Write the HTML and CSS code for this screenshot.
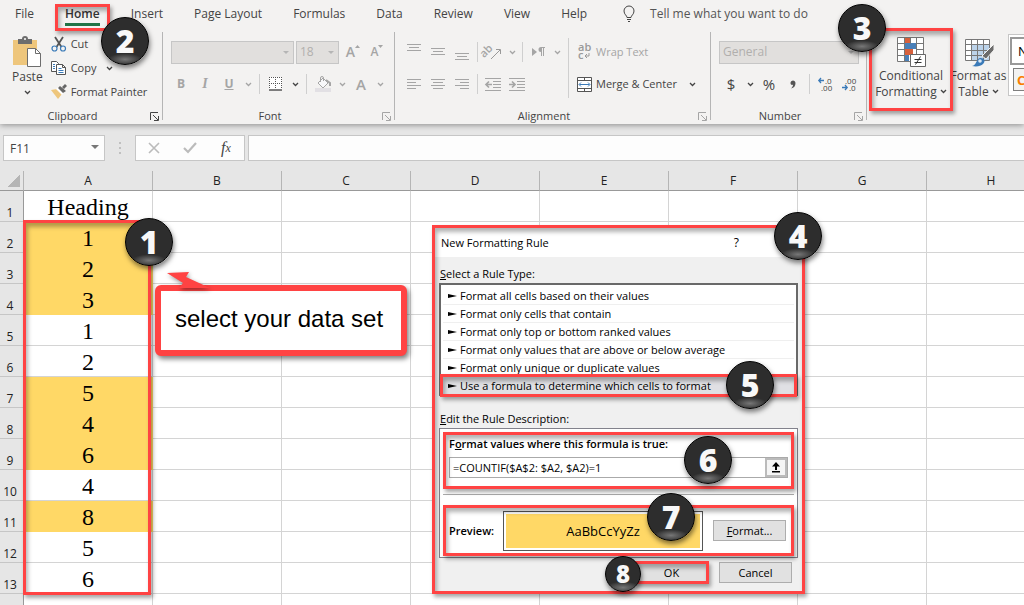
FILE: index.html
```html
<!DOCTYPE html>
<html lang="en">
<head>
    <meta charset="UTF-8">
    <meta name="viewport" content="width=device-width, initial-scale=1.0">
    <title>New Formatting Rule</title>
    <link rel="stylesheet" href="styles.css">
</head>
<body>
    <!-- shared icons -->
    <svg class="defs" width="0" height="0">
        <symbol id="chev" viewBox="0 0 7 5"><path d="M1 1l2.5 2.5L6 1" fill="none" stroke="currentColor" stroke-width="1.3"/></symbol>
        <symbol id="launch" viewBox="0 0 9 9"><path d="M.5 8V.5H8M3 3l5 5M8.500 4v4.500H4" fill="none" stroke="currentColor"/></symbol>
    </svg>

    <header class="ribbon">
        <nav class="tabs">
            <button class="tab">File</button>
            <button class="tab active">Home<span class="mark mark-home"></span></button>
            <button class="tab">Insert</button>
            <button class="tab">Page Layout</button>
            <button class="tab">Formulas</button>
            <button class="tab">Data</button>
            <button class="tab">Review</button>
            <button class="tab">View</button>
            <button class="tab">Help</button>
            <button class="tab tell">
                <svg width="12" height="17" viewBox="0 0 12 17" fill="none" stroke="#444"><path d="M4 12.500c0-2-3-3-3-6.500a5 5 0 0 1 10 0c0 3.500-3 4.500-3 6.500zM4 14.500h4M5 16.500h2"/></svg>
                Tell me what you want to do
            </button>
        </nav>

        <div class="groups">
            <section class="group clipboard">
                <div class="tools">
                    <button class="big paste">
                        <svg width="30" height="32" viewBox="0 0 30 32">
                            <path d="M1 4h24v25H1z" fill="#eec67c"/>
                            <path d="M6 3h4a3 3 0 0 1 6 0h4v5H6z" fill="#6d6d6d"/><circle cx="13" cy="3" r="1" fill="#fff"/>
                            <path d="M15.500 12.500h8l5 5v13h-13z" fill="#fff" stroke="#6d6d6d"/><path d="M23.500 12.500v5h5" fill="none" stroke="#6d6d6d"/>
                        </svg>
                        <span>Paste</span>
                        <svg class="chev"><use href="#chev"/></svg>
                    </button>
                    <div class="stack">
                        <button class="line">
                            <svg width="16" height="16" viewBox="0 0 16 16" fill="none"><path d="M4 1l6.500 10M12 1L5.500 11" stroke="#555" stroke-width="1.800"/><circle cx="3.500" cy="12.500" r="2.500" stroke="#3a7ab8" stroke-width="1.200"/><circle cx="12" cy="12.500" r="2.500" stroke="#3a7ab8" stroke-width="1.200"/></svg>
                            Cut
                        </button>
                        <button class="line">
                            <svg width="16" height="16" viewBox="0 0 16 16"><path d="M.5 1.500h5l2 2v8h-7z" fill="#fff" stroke="#555"/><path d="M5.500 4.500h6l3 3v7h-9z" fill="#fff" stroke="#555"/><path d="M11.500 4.500v3h3" fill="none" stroke="#555"/><path d="M2 4.500h2M2 6.500h2M2 8.500h2M7.500 8.500h3M7.500 10.500h5M7.500 12.500h5" stroke="#3a7ab8"/></svg>
                            Copy
                            <svg class="chev copy-chev"><use href="#chev"/></svg>
                        </button>
                        <button class="line">
                            <svg width="16" height="16" viewBox="0 0 16 16"><path d="M0 6l6-1 5 5-4 5z" fill="#eec67c"/><path d="M5 5l3-2 5 5-2 3z" fill="#fff"/><path d="M7 4l2-2 6 5-3 2zM11 3l3-3 2 2-3 3z" fill="#666"/></svg>
                            Format Painter
                        </button>
                    </div>
                </div>
                <footer>Clipboard<svg class="launch"><use href="#launch"/></svg></footer>
            </section>

            <section class="group font">
                <div class="tools rows">
                    <div class="row fields">
                        <label class="combo combo-font"><select aria-label="Font" disabled><option></option></select></label>
                        <label class="combo combo-size"><select aria-label="Font size" disabled><option>18</option></select></label>
                        <button class="tool grow-font off">A<svg width="5" height="3" viewBox="0 0 5 3"><path d="M0 3L2.500 0 5 3z" fill="currentColor"/></svg></button>
                        <button class="tool shrink-font off">A<svg width="5" height="3" viewBox="0 0 5 3"><path d="M0 0h5L2.500 3z" fill="currentColor"/></svg></button>
                    </div>
                    <div class="row">
                        <button class="tool off"><b>B</b></button>
                        <button class="tool off"><i>I</i></button>
                        <button class="tool off"><u>U</u></button>
                        <button class="drop off"><svg class="chev"><use href="#chev"/></svg></button>
                        <span class="sep"></span>
                        <button class="tool">
                            <svg width="14" height="14" viewBox="0 0 14 14" fill="none" stroke="#555"><path d="M0 0h13v13H0z" fill="#fff" stroke="none"/><path d="M.5 0v12M6.500 0v12M12.500 0v12M0 .5h12M0 6.500h12" stroke-dasharray="1 1"/><path d="M0 13h13" stroke-width="1.500"/></svg>
                        </button>
                        <button class="drop"><svg class="chev"><use href="#chev"/></svg></button>
                        <span class="sep"></span>
                        <button class="tool off">
                            <svg width="17" height="17" viewBox="0 0 17 17" fill="none" stroke="#a5a5a5"><path d="M0 12h16v4H0z" fill="#e2e0e4" stroke="none"/><path d="M3 7l5-5 5 5-5 5z" fill="#f8f8fa"/><path d="M5.500 6V2a1.500 1.500 0 0 1 3 0v3"/><path d="M11 4l4 3v3" stroke-width="2"/></svg>
                        </button>
                        <button class="drop off"><svg class="chev"><use href="#chev"/></svg></button>
                        <button class="tool font-color off">A</button>
                        <button class="drop off"><svg class="chev"><use href="#chev"/></svg></button>
                    </div>
                </div>
                <footer>Font<svg class="launch off"><use href="#launch"/></svg></footer>
            </section>

            <section class="group alignment">
                <div class="tools">
                    <div class="rows">
                        <div class="row">
                            <button class="tool off"><svg width="14" height="18" viewBox="0 0 14 18" stroke="#a5a5a5"><path d="M0 1.500h14M2 4.500h10M0 7.500h14"/></svg></button>
                            <button class="tool off"><svg width="14" height="18" viewBox="0 0 14 18" stroke="#a5a5a5"><path d="M0 5.500h14M2 8.500h10M0 11.500h14"/></svg></button>
                            <button class="tool off"><svg width="14" height="18" viewBox="0 0 14 18" stroke="#a5a5a5"><path d="M0 10.500h14M2 13.500h10M0 16.500h14"/></svg></button>
                            <span class="sep"></span>
                            <button class="tool off"><svg width="18" height="18" viewBox="0 0 18 18"><text x="-3" y="10" transform="rotate(-45 5 9)" font-size="11" font-weight="600" fill="#a5a5a5">ab</text><path d="M7 16l9-9M12 6.500h4.500V11" fill="none" stroke="#999"/></svg></button>
                            <button class="drop off"><svg class="chev"><use href="#chev"/></svg></button>
                            <span class="sep"></span>
                            <button class="tool off"><svg width="13" height="10" viewBox="0 0 13 10"><path d="M0 1l5 4-5 4zM9 0h4v1h-1v8h-1V1h-1v8H9V5a2.500 2.500 0 0 1 0-5z" fill="#a5a5a5"/></svg></button>
                            <button class="drop off"><svg class="chev"><use href="#chev"/></svg></button>
                        </div>
                        <div class="row">
                            <button class="tool off"><svg width="14" height="11" viewBox="0 0 14 11" stroke="#a5a5a5"><path d="M0 .5h14M0 3.500h9M0 6.500h14M0 9.500h9"/></svg></button>
                            <button class="tool off"><svg width="14" height="11" viewBox="0 0 14 11" stroke="#a5a5a5"><path d="M0 .5h14M2 3.500h10M0 6.500h14M2 9.500h10"/></svg></button>
                            <button class="tool off"><svg width="14" height="11" viewBox="0 0 14 11" stroke="#a5a5a5"><path d="M0 .5h14M5 3.500h9M0 6.500h14M5 9.500h9"/></svg></button>
                            <span class="sep"></span>
                            <button class="tool off"><svg width="16" height="13" viewBox="0 0 16 13" fill="none" stroke="#a5a5a5"><path d="M0 .5h16M8 3.500h8M8 6.500h8M8 9.500h8M0 12.500h16"/><path d="M7 6.500H1M4 3.500l-3 3 3 3" stroke-width="1.700"/></svg></button>
                            <button class="tool off"><svg width="16" height="13" viewBox="0 0 16 13" fill="none" stroke="#a5a5a5"><path d="M0 .5h16M8 3.500h8M8 6.500h8M8 9.500h8M0 12.500h16"/><path d="M0 6.500h6M3 3.500l3 3-3 3" stroke-width="1.700"/></svg></button>
                        </div>
                    </div>
                    <span class="sep tall"></span>
                    <div class="rows wide">
                        <button class="line off">
                            <svg width="15" height="18" viewBox="0 0 15 18"><text x="1" y="8" font-size="11" font-weight="600" fill="#999">ab</text><text x="1" y="16" font-size="11" font-weight="600" fill="#999">c</text><path d="M12 10v3H8M10 11l-2 2 2 2" fill="none" stroke="#999"/></svg>
                            Wrap Text
                        </button>
                        <button class="line">
                            <svg width="15" height="15" viewBox="0 0 15 15" fill="none"><path d="M.5.5h14v14H.5zM.5 3.500h14M.5 11.500h14M7.500.5v3M7.500 11.500v3" fill="#fff" stroke="#555"/><path d="M2.500 7.500h10M4 5.500l-2 2 2 2M11 5.500l2 2-2 2" stroke="#3a7ab8"/></svg>
                            Merge &amp; Center
                            <svg class="chev"><use href="#chev"/></svg>
                        </button>
                    </div>
                </div>
                <footer>Alignment<svg class="launch off"><use href="#launch"/></svg></footer>
            </section>

            <section class="group number">
                <div class="tools rows">
                    <div class="row">
                        <label class="combo combo-number"><select aria-label="Number format" disabled><option>General</option></select></label>
                    </div>
                    <div class="row">
                        <button class="tool sign">$</button>
                        <button class="drop"><svg class="chev"><use href="#chev"/></svg></button>
                        <button class="tool sign">%</button>
                        <button class="tool comma"><svg width="6" height="9" viewBox="0 0 6 9"><path d="M1 4.500A2.500 2.500 0 1 1 5.500 3C5.500 6 4 8 1 8.500 2.500 7 3 6 3 4.800 2 5 1.500 5 1 4.500z" fill="#555"/></svg></button>
                        <span class="sep"></span>
                        <button class="tool"><svg width="16" height="16" viewBox="0 0 16 16"><text x="7" y="8" font-size="8">.0</text><text x="3" y="15" font-size="8">.00</text><path d="M6 4.500H1M3 2L.8 4.500 3 7" fill="none" stroke="#3a7ab8" stroke-width="1.300"/></svg></button>
                        <button class="tool"><svg width="16" height="16" viewBox="0 0 16 16"><text x="3" y="8" font-size="8">.00</text><text x="7" y="15" font-size="8">.0</text><path d="M0 11.500h5M3 9l2.200 2.500L3 14" fill="none" stroke="#3a7ab8" stroke-width="1.300"/></svg></button>
                    </div>
                </div>
                <footer>Number<svg class="launch off"><use href="#launch"/></svg></footer>
            </section>

            <section class="group styles">
                <button class="big cond">
                    <svg width="30" height="32" viewBox="0 0 30 32">
                        <path d="M1.500 1.500h26v24h-26z" fill="#fff"/>
                        <path d="M8 1h7v6H8zM8 13h9v6H8z" fill="#d8613c"/><path d="M8 7h12v6H8zM8 19h5v6H8z" fill="#4a80b8"/>
                        <path d="M1.500 1.500h26v24h-26zM8.500 1.500v24M14.500 1.500v6M20.500 1.500v24M1.500 7.500h7M1.500 13.500h7M1.500 19.500h7M20.500 7.500h7M20.500 13.500h7" fill="none" stroke="#777"/>
                        <path d="M14.500 18.500h15v12h-15z" fill="#fff" stroke="#666"/>
                        <path d="M18.500 23.500h7M18.500 26.500h7M24.500 20.500l-5 8" stroke="#333" fill="none"/>
                    </svg>
                    <span>Conditional<br>Formatting <svg class="chev"><use href="#chev"/></svg></span>
                    <span class="mark mark-cond"></span>
                    <span class="badge badge-3">3</span>
                </button>
                <button class="big table-format">
                    <svg width="30" height="32" viewBox="0 0 30 32">
                        <path d="M1.500 3.500h24v21h-24z" fill="#fff"/><path d="M8 9h17v15H8z" fill="#bcd3ea"/>
                        <path d="M1.500 3.500h24v21h-24zM7.500 3.500v21M13.500 3.500v21M19.500 3.500v21M1.500 8.500h24M1.500 14.500h24M1.500 19.500h24" fill="none" stroke="#777"/>
                        <path d="M30 8v6l-8 9-4-3z" fill="#6b6b6b" stroke="#f3f2f1"/>
                        <path d="M8 30c5-1 4-7 8-8 4-.5 6 3 3 6-2 2-6 3-11 2z" fill="#3a7ab8"/><circle cx="16" cy="25" r="1.800" fill="#dce8f4"/>
                    </svg>
                    <span>Format as<br>Table <svg class="chev"><use href="#chev"/></svg></span>
                </button>
                <div class="gallery">
                    <button class="swatch normal">Normal</button>
                    <button class="swatch calc">Calculation</button>
                </div>
            </section>
        </div>
        <span class="badge badge-2">2</span>
    </header>

    <div class="formula-bar">
        <div class="name-box"><input type="text" aria-label="Name box" value="F11"><i class="tri"></i></div>
        <span class="dots"></span>
        <div class="fx">
            <button aria-label="Cancel entry"><svg width="12" height="12" viewBox="0 0 12 12"><path d="M1 1l10 10M11 1L1 11" stroke="#bbb" stroke-width="1.600"/></svg></button>
            <button aria-label="Enter"><svg width="14" height="12" viewBox="0 0 14 12"><path d="M1 6l4 4 8-9" fill="none" stroke="#bbb" stroke-width="2.200"/></svg></button>
            <button class="fn">f<small>x</small></button>
        </div>
        <input class="formula" type="text" aria-label="Formula">
    </div>

    <main class="sheet">
        <table class="grid">
            <colgroup><col class="num"><col span="8" class="data"></colgroup>
            <thead>
                <tr><th class="corner"></th><th>A</th><th>B</th><th>C</th><th>D</th><th>E</th><th>F</th><th>G</th><th>H</th></tr>
            </thead>
            <tbody>
                <tr><th>1</th><td>Heading</td><td></td><td></td><td></td><td></td><td></td><td></td><td></td></tr>
                <tr><th>2</th><td class="hit">1</td><td></td><td></td><td></td><td></td><td></td><td></td><td></td></tr>
                <tr><th>3</th><td class="hit">2</td><td></td><td></td><td></td><td></td><td></td><td></td><td></td></tr>
                <tr><th>4</th><td class="hit">3</td><td></td><td></td><td></td><td></td><td></td><td></td><td></td></tr>
                <tr><th>5</th><td>1</td><td></td><td></td><td></td><td></td><td></td><td></td><td></td></tr>
                <tr><th>6</th><td>2</td><td></td><td></td><td></td><td></td><td></td><td></td><td></td></tr>
                <tr><th>7</th><td class="hit">5</td><td></td><td></td><td></td><td></td><td></td><td></td><td></td></tr>
                <tr><th>8</th><td class="hit">4</td><td></td><td></td><td></td><td></td><td></td><td></td><td></td></tr>
                <tr><th>9</th><td class="hit">6</td><td></td><td></td><td></td><td></td><td></td><td></td><td></td></tr>
                <tr><th>10</th><td>4</td><td></td><td></td><td></td><td></td><td></td><td></td><td></td></tr>
                <tr><th>11</th><td class="hit">8</td><td></td><td></td><td></td><td></td><td></td><td></td><td></td></tr>
                <tr><th>12</th><td>5</td><td></td><td></td><td></td><td></td><td></td><td></td><td></td></tr>
                <tr><th>13</th><td>6</td><td></td><td></td><td></td><td></td><td></td><td></td><td></td></tr>
                <tr><th></th><td></td><td></td><td></td><td></td><td></td><td></td><td></td><td></td></tr>
            </tbody>
        </table>

        <span class="mark mark-data"></span>
        <span class="badge badge-1">1</span>

        <div class="callout">
            <svg class="pointer" width="44" height="20" viewBox="0 0 44 20"><path d="M2 2l22-1-3 5 24 11H14l4-5z" fill="#ff4343"/></svg>
            <p>select your data set</p>
        </div>

        <div class="dialog" role="dialog" aria-label="New Formatting Rule">
            <div class="title"><span>New Formatting Rule</span><button class="help">?</button></div>
            <div class="content">
                <p class="caption"><u>S</u>elect a Rule Type:</p>
                <ul class="rules">
                    <li>Format all cells based on their values</li>
                    <li>Format only cells that contain</li>
                    <li>Format only top or bottom ranked values</li>
                    <li>Format only values that are above or below average</li>
                    <li>Format only unique or duplicate values</li>
                    <li class="selected">Use a formula to determine which cells to format<span class="mark mark-rule"></span><span class="badge badge-5">5</span></li>
                </ul>
                <p class="caption"><u>E</u>dit the Rule Description:</p>
                <div class="description">
                    <div class="condition">
                        <label for="formula">F<u>o</u>rmat values where this formula is true:</label>
                        <div class="ref-edit">
                            <input id="formula" type="text" value="=COUNTIF($A$2: $A2, $A2)=1">
                            <button aria-label="Collapse dialog"><svg width="10" height="11" viewBox="0 0 10 11"><path d="M5 0l4 4.500H6V8H4V4.500H1zM1 9h8v1.500H1z"/></svg></button>
                        </div>
                        <span class="mark mark-inner"></span>
                        <span class="badge badge-6">6</span>
                    </div>
                    <div class="preview">
                        <b>Preview:</b>
                        <div class="sample"><span>AaBbCcYyZz</span></div>
                        <button class="btn"><span><u>F</u>ormat...</span></button>
                        <span class="mark mark-inner"></span>
                        <span class="badge badge-7">7</span>
                    </div>
                </div>
                <div class="actions">
                    <button class="btn">OK<span class="mark mark-ok"></span><span class="badge small badge-8">8</span></button>
                    <button class="btn">Cancel</button>
                </div>
            </div>
            <span class="mark mark-dialog"></span>
            <span class="badge badge-4">4</span>
        </div>
    </main>
</body>
</html>
```
FILE: styles.css
```css
*{
    padding: 0;
    margin: 0;
    box-sizing: border-box;
}
body{
    display: flex;
    flex-direction: column;
    height: 100vh;
    overflow: hidden;
    background: #e6e6e6;
    color: #444;
    font-family: "Open Sans", "Noto Sans", sans-serif;
    font-size: 12px;
    line-height: 16px;
}
button{
    border: 0;
    background: none;
    color: inherit;
    font: inherit;
    white-space: nowrap;
}
input, select{
    font: inherit;
    color: inherit;
    border: 0;
    outline: 0;
    min-width: 0;
}
svg{
    display: block;
    flex: none;
    overflow: visible;
}
.defs{
    position: absolute;
}
.off{
    color: #a5a5a5;
}
.chev{
    width: 7px;
    height: 5px;
}

/* red frames and numbered badges */
.mark{
    position: absolute;
    border: 3px solid #ff4343;
    box-shadow: 2px 3px 4px rgba(0,0,0,.35), inset 2px 4px 4px rgba(0,0,0,.3);
    pointer-events: none;
    z-index: 2;
}
.badge{
    position: absolute;
    z-index: 4;
    width: 48px;
    height: 48px;
    border-radius: 50%;
    border: 1px solid #000;
    background: radial-gradient(ellipse 17px 6px at 50% 90%, #777 0%, #2d2d2d 100%);
    box-shadow: 1px 3px 5px rgba(0,0,0,.5);
    color: #f8f8f8;
    font-size: 32px;
    font-weight: 800;
    line-height: 46px;
    text-align: center;
}
.badge.small{
    width: 36px;
    height: 36px;
    font-size: 24px;
    line-height: 34px;
}

/* ribbon */
.ribbon{
    position: relative;
    z-index: 3;
    background: #f3f2f1;
    box-shadow: 0 1px 6px rgba(0,0,0,.4);
}
.tabs{
    display: flex;
    gap: 31px;
    height: 28px;
    padding: 5px 15px 0;
}
.tab{
    position: relative;
    height: 21px;
    line-height: 18px;
    display: flex;
}
.tab.active{
    font-weight: 600;
    color: #333;
    border-bottom: 3px solid #217346;
}
.mark-home{
    inset: -1px -10px -8px -10px;
}
.tell{
    gap: 15px;
    margin-left: 5px;
    color: #555;
}
.badge-2{
    left: 101px;
    top: 17px;
}
.groups{
    display: flex;
    height: 96px;
}
.group{
    position: relative;
    flex: none;
    display: flex;
    flex-direction: column;
    padding: 4px 0 0;
}
.group:not(.styles)::after{
    content: "";
    position: absolute;
    right: 0;
    top: 4px;
    bottom: 4px;
    width: 1px;
    background: #b5b5b5;
}
.group footer{
    display: flex;
    align-items: center;
    justify-content: center;
    position: relative;
    height: 16px;
    padding-right: 18px;
    font-size: 11px;
}
.launch{
    position: absolute;
    right: 4px;
    top: 4px;
    width: 9px;
    height: 9px;
}
.tools{
    display: flex;
    height: 76px;
}
.big{
    position: relative;
    flex: none;
    display: flex;
    flex-direction: column;
    align-items: center;
    padding-top: 4px;
}
.big span .chev{
    display: inline-block;
    vertical-align: 2px;
}
.paste > span{
    line-height: 18px;
    margin-bottom: 4px;
}
.clipboard{
    width: 163px;
}
.clipboard .tools{
    padding-left: 12px;
    gap: 8px;
}
.stack{
    display: flex;
    flex-direction: column;
}
.line{
    display: flex;
    align-items: center;
    gap: 4px;
    height: 24px;
    font-size: 11px;
}
.copy-chev{
    margin-left: 6px;
}
.rows{
    display: flex;
    flex-direction: column;
    gap: 8px;
    padding-top: 8px;
}
.row{
    display: flex;
    align-items: center;
    height: 24px;
}
.tool{
    display: flex;
    align-items: center;
    justify-content: center;
    width: 24px;
    height: 24px;
}
.tool b, .tool u{
    font-weight: 700;
}
.tool i{
    font-family: "Liberation Serif", serif;
    font-size: 14px;
    font-weight: 700;
}
.drop{
    display: flex;
    align-items: center;
    justify-content: center;
    width: 14px;
    height: 24px;
}
.sep{
    width: 1px;
    height: 20px;
    margin: 0 4px;
    background: #cfcfcf;
}
.combo{
    position: relative;
    height: 23px;
    border: 1px solid #c6c6c6;
    background: #e1dfdd;
}
.combo::after, .tri{
    content: "";
    position: absolute;
    right: 4px;
    top: 9px;
    border: 3px solid transparent;
    border-top-color: #b5b5b5;
    border-bottom: 0;
}
.combo select{
    appearance: none;
    width: 100%;
    height: 21px;
    padding-left: 3px;
    background: none;
    color: #b1afad;
    opacity: 1;
}
.font{
    width: 232px;
}
.font .tools{
    padding-left: 6px;
}
.fields{
    padding-left: 2px;
}
.combo-font{
    width: 123px;
    margin-right: 2px;
}
.combo-size{
    width: 43px;
    margin-right: 2px;
}
.grow-font, .shrink-font{
    align-items: center;
    font-weight: 600;
    font-size: 14px;
}
.grow-font svg, .shrink-font svg{
    margin-bottom: 12px;
}
.shrink-font{
    font-size: 12px;
}
.font-color{
    font-size: 15px;
    font-weight: 600;
}
.alignment{
    width: 316px;
}
.alignment .tools{
    padding-left: 7px;
}
.alignment .sep{
    margin: 0 3px;
}
.alignment .tall{
    height: 60px;
    margin: 6px 8px 0 4px;
}
.wide .chev{
    margin-left: 8px;
}
.number{
    width: 156px;
}
.number .tools{
    padding-left: 8px;
}
.combo-number{
    width: 140px;
}
.sign{
    font-size: 15px;
}
.number text{
    fill: #444;
}
.styles{
    flex: 1;
    flex-direction: row;
    min-width: 0;
}
.cond{
    width: 84px;
    height: 84px;
    margin-left: 2px;
}
.table-format{
    width: 51px;
    height: 84px;
}
.mark-cond{
    inset: -4px 0 5px 0;
}
.badge-3{
    left: -31px;
    top: -28px;
}
.gallery{
    flex: 1;
    min-width: 0;
    height: 62px;
    margin: 2px 0 0 4px;
    padding: 2px 0 2px 1px;
    border: 1px solid #c6c6c6;
    border-right: 0;
    background: #fff;
    overflow: hidden;
}
.swatch{
    display: block;
    width: 76px;
    height: 28px;
    padding-left: 6px;
    border: 2px solid #999;
    font-size: 13px;
    text-align: left;
    color: #000;
}
.calc{
    height: 23px;
    margin: 3px 0 0 3px;
    padding-left: 3px;
    border: 1px solid #7f7f7f;
    background: #f2f2f2;
    color: #fa7d00;
    font-weight: 700;
}

/* formula bar */
.formula-bar{
    display: flex;
    height: 47px;
    padding: 11px 0 10px 3px;
}
.name-box, .fx, .formula{
    height: 26px;
    border: 1px solid #c6c6c6;
    background: #fdfdfd;
}
.name-box{
    position: relative;
    width: 102px;
}
.name-box input{
    width: 80px;
    height: 24px;
    padding-left: 6px;
    background: none;
}
.name-box .tri{
    right: 5px;
    border-width: 4px 4px 0;
    border-top-color: #777;
}
.dots{
    width: 30px;
    background: radial-gradient(circle, #999 1px, transparent 1px) center / 30px 5px;
    margin: 5px 0;
}
.fx{
    display: flex;
    width: 110px;
    margin-right: 3px;
}
.fx button{
    flex: 1;
    display: flex;
    align-items: center;
    justify-content: center;
}
.fx .fn{
    font: italic 16px "Liberation Serif", serif;
}
.fn small{
    font-size: 12px;
}
.formula{
    flex: 1;
    border-right: 0;
}

/* sheet */
.sheet{
    position: relative;
    flex: 1;
    min-height: 0;
    overflow: hidden;
}
.grid{
    width: 1056px;
    min-width: 100%;
    table-layout: fixed;
    border-collapse: separate;
    border-spacing: 0;
    background: #fff;
}
.num{
    width: 24px;
}
.data{
    width: 129px;
}
.grid th{
    background: #e6e6e6;
    color: #222;
    font-weight: 400;
    border-right: 1px solid #b5b5b5;
    border-bottom: 1px solid #c6c6c6;
}
.grid thead th{
    height: 20px;
    border-bottom-color: #999;
}
.grid .corner{
    background: linear-gradient(135deg, transparent 50%, #b5b5b5 50%) 8px 4px / 12px 12px no-repeat #e6e6e6;
}
.grid tbody th{
    height: 31px;
    padding-right: 3px;
    vertical-align: bottom;
    border-right-color: #999;
}
.grid td{
    height: 31px;
    border-right: 1px solid #d4d4d4;
    border-bottom: 1px solid #d4d4d4;
    color: #000;
    font-family: "Liberation Serif", serif;
    font-size: 24px;
    line-height: 28px;
    padding-top: 2px;
    text-align: center;
}
.grid .hit{
    background: #ffd866;
    border-color: #ffd866;
}
.mark-data{
    left: 23px;
    top: 49px;
    width: 128px;
    height: 375px;
}
.badge-1{
    left: 125px;
    top: 47px;
}
.callout{
    position: absolute;
    left: 155px;
    top: 114px;
    z-index: 3;
    padding: 14px 18px 14px 14px;
    border: 6px solid #ff4343;
    border-radius: 6px;
    background: #fff;
    box-shadow: 2px 3px 5px rgba(0,0,0,.5);
    color: #000;
    font-family: "Liberation Sans", sans-serif;
    font-size: 24px;
    line-height: 28px;
    padding-bottom: 17px;
    white-space: nowrap;
}
.pointer{
    position: absolute;
    left: 4px;
    top: -20px;
    filter: drop-shadow(1px 2px 2px rgba(0,0,0,.4));
}

/* dialog */
.dialog{
    position: absolute;
    left: 432px;
    top: 54px;
    width: 373px;
    padding: 3px;
    background: #f0f0f0;
    color: #000;
    font-size: 11px;
}
.mark-dialog{
    inset: 0;
    z-index: 1;
}
.badge-4{
    right: -17px;
    top: -13px;
}
.title{
    display: flex;
    justify-content: space-between;
    align-items: center;
    height: 29px;
    padding: 0 63px 0 6px;
    background: #fff;
}
.help{
    font-size: 12px;
}
.content{
    padding: 9px 4px 8px;
}
.caption{
    padding-left: 1px;
    margin-bottom: 1px;
}
.rules{
    list-style: none;
    margin-bottom: 15px;
    padding: 2px 2px 0;
    border: 2px solid #696969;
    border-bottom: 1px solid #999;
    background: #fff;
}
.rules li{
    position: relative;
    height: 18px;
    padding-left: 17px;
    border-bottom: 1px solid #efefef;
    line-height: 18px;
}
.rules li::before{
    content: "";
    position: absolute;
    left: 5px;
    top: 7px;
    border: 2px solid transparent;
    border-left: 9px solid #000;
}
.rules .selected{
    background: #e0e0e4;
}
.mark-rule{
    inset: -3px;
}
.badge-5{
    left: 283px;
    top: -16px;
}
.description{
    padding: 3px 3px 1px;
    border: 1px solid #82828c;
    background: #fff;
}
.condition, .preview{
    position: relative;
}
.condition{
    height: 57px;
    padding: 4px 6px 0;
}
.condition label, .preview b{
    font-weight: 600;
}
.condition label{
    display: block;
    margin-bottom: 5px;
}
.ref-edit{
    display: flex;
    height: 21px;
    border: 1px solid #aaa;
}
.ref-edit input{
    flex: 1;
    padding-left: 3px;
}
.ref-edit button{
    width: 22px;
    display: flex;
    align-items: center;
    justify-content: center;
    border: 2px solid #bbb;
    background: #f5f5f5;
}
.mark-inner{
    inset: 0;
}
.badge-6{
    left: 241px;
    top: 4px;
}
.preview{
    display: flex;
    align-items: center;
    height: 51px;
    margin-top: 16px;
    padding: 0 6px;
}
.preview::before{
    content: "";
    position: absolute;
    left: 0;
    right: 0;
    top: -11px;
    border-top: 1px solid #aaa;
}
.preview b{
    width: 54px;
}
.sample{
    width: 200px;
    height: 40px;
    margin-right: 10px;
    padding: 2px;
    border: 1px solid #555;
}
.sample span{
    display: block;
    height: 34px;
    background: #ffd866;
    font-size: 13px;
    line-height: 34px;
    text-align: center;
}
.badge-7{
    left: 204px;
    top: -12px;
}
.btn{
    position: relative;
    flex: none;
    width: 73px;
    height: 21px;
    border: 1px solid #adadad;
    background: #e1e1e1;
}
.actions{
    display: flex;
    justify-content: flex-end;
    gap: 11px;
    padding: 4px 6px 0;
}
.mark-ok{
    inset: -2px;
}
.badge-8{
    left: -31px;
    top: -7px;
}
```
